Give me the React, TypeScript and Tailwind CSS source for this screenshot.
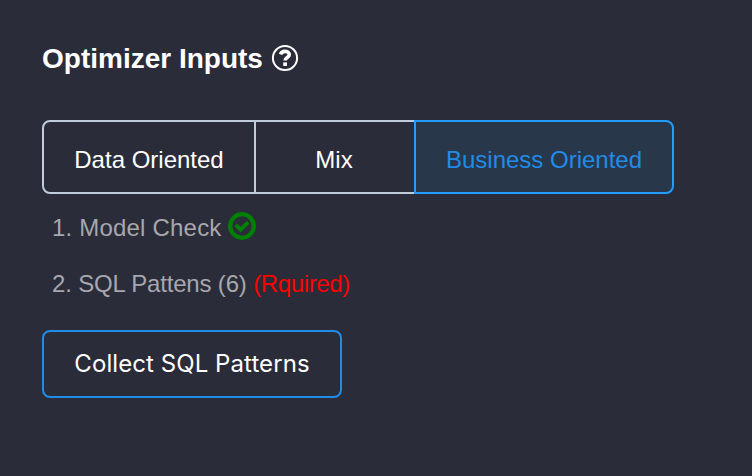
function QuestionIcon() {
  return (
    <svg className="size-[28px]" viewBox="0 0 28 28" fill="none" stroke="currentColor">
      <circle cx="14" cy="14" r="12.1" strokeWidth="2" />
      <path d="M9.5 10.3C10.3 8.3 11.8 7.4 14 7.4c2.4 0 4.3 1.2 4.3 3.1 0 3.1-4.2 2.8-4.2 6" strokeWidth="3.6" />
      <path d="M12.2 18.4h3.8v3.6h-3.8z" fill="currentColor" stroke="none" />
    </svg>
  );
}

function CheckIcon() {
  return (
    <svg className="mb-[4px] size-[28px] text-[#008000]" viewBox="0 0 28 28" fill="none" stroke="currentColor">
      <circle cx="14" cy="14" r="11.8" strokeWidth="4.2" />
      <path d="M7.8 12.9l4.8 4.8 7.6-7.6" strokeWidth="3.8" />
    </svg>
  );
}

export default function App() {
  return (
    <main className="h-[476px] w-[752px] bg-[#2a2c39] pl-[42px] pt-[40px] font-['Liberation_Sans',Arial,sans-serif] text-[24px] leading-9 text-[#a7a7ad]">
      <h1 className="flex h-9 items-center gap-[8px] text-[28px] font-bold text-white">
        <span className="w-[221px] whitespace-nowrap pt-0.5">Optimizer Inputs</span>
        <QuestionIcon />
      </h1>
      <div className="mt-11 flex h-[74px] w-[632px] text-white">
        <button className="w-[214px] rounded-l-[8px] border-2 border-[#c1ccda] pt-1.5">Data Oriented</button>
        <button className="w-[158px] border-y-2 border-[#c1ccda] pt-1.5 pr-0.5">Mix</button>
        <button className="w-[260px] rounded-r-[8px] border-2 border-[#229dff] bg-[#28374a] pt-1.5 text-[#228be6]">Business Oriented</button>
      </div>
      <p className="mt-4 flex h-9 items-center gap-[6px] pl-[10px]">
        <span className="w-[170px] whitespace-nowrap tracking-[0.2px]">1. Model Check</span>
        <CheckIcon />
      </p>
      <p className="mt-5 h-9 pl-[10px] tracking-[-0.18px]">
        2. SQL Pattens (6) <span className="tracking-[-0.36px] text-[#ff0000]">(Rquired)</span>
      </p>
      <button className="mt-7 h-[68px] w-[300px] rounded-[8px] border-2 border-[#228be6] font-[Inter,sans-serif] text-[24px] tracking-[0.07px] text-white">Collect SQL Patterns</button>
    </main>
  );
}
